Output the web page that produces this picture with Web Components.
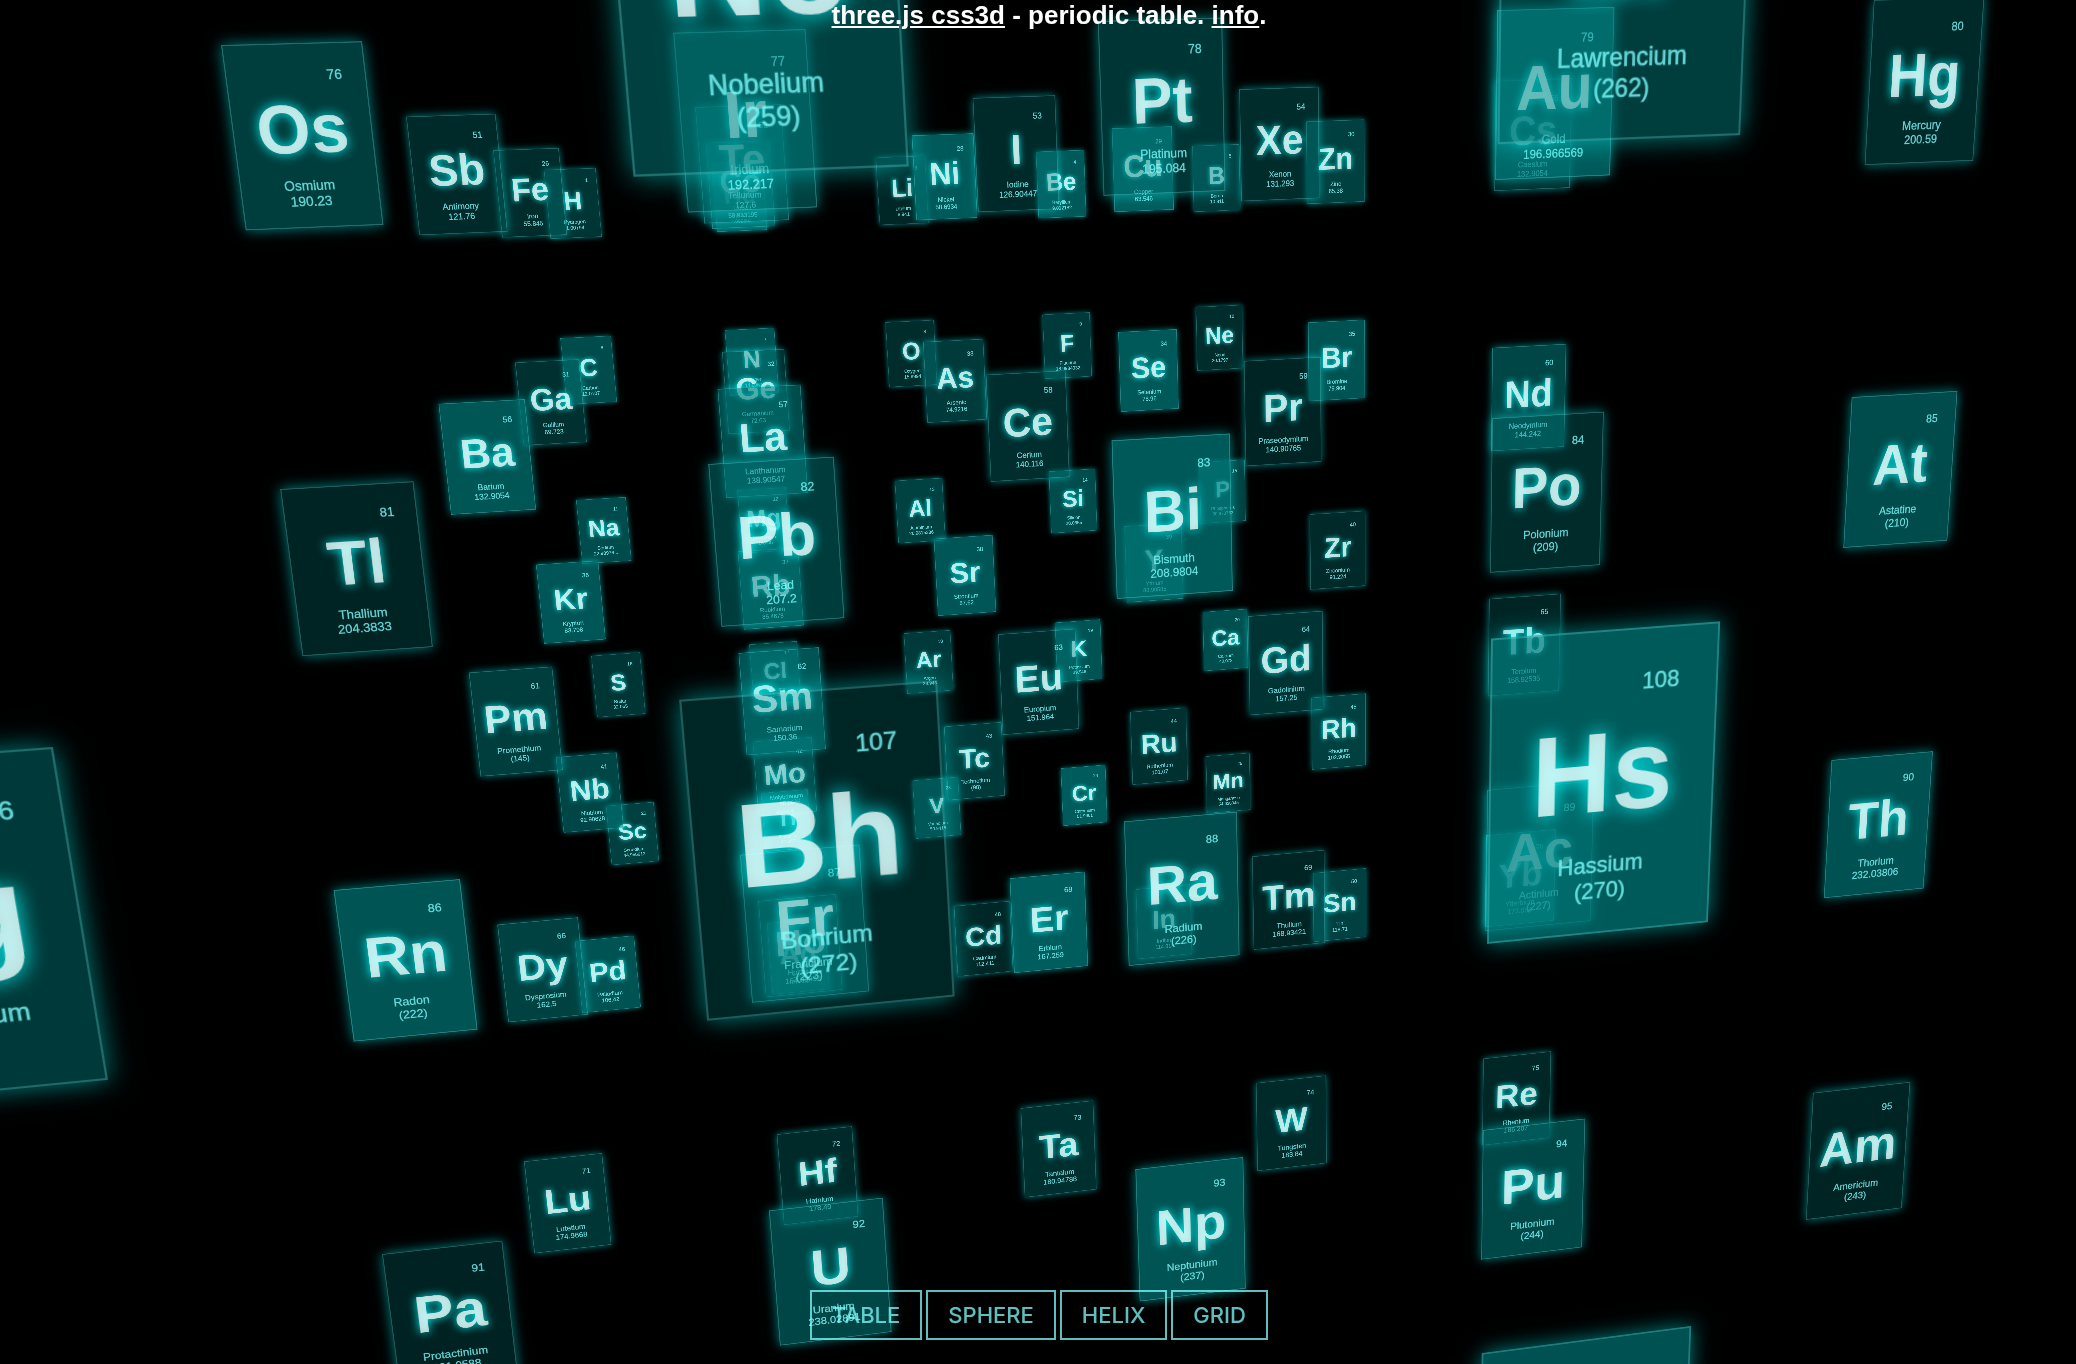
<!DOCTYPE html>
<html lang="en">
<head>
<meta charset="utf-8">
<meta name="viewport" content="width=device-width, initial-scale=1">
<title>three.js css3d - periodic table</title>
<style>
  html, body { height: 100%; margin: 0; background: #000; overflow: hidden; }
  body { font-family: "Liberation Sans", Helvetica, Arial, sans-serif; }
</style>
</head>
<body>
<periodic-app></periodic-app>

<template id="tpl-app">
  <style>
    :host { display: grid; height: 100vh; grid-template: minmax(0, 1fr) / minmax(0, 1fr); overflow: hidden; }
    element-scene, .overlay { grid-area: 1 / 1; min-width: 0; min-height: 0; }
    .overlay {
      display: flex; flex-direction: column; justify-content: space-between;
      z-index: 1; pointer-events: none;
    }
    info-bar, layout-menu { pointer-events: auto; }
  </style>
  <element-scene></element-scene>
  <div class="overlay">
    <info-bar>
      <a href="#threejs">three.js css3d</a> - periodic table. <a href="#info">info</a>.
    </info-bar>
    <layout-menu>
      <menu-button>TABLE</menu-button>
      <menu-button>SPHERE</menu-button>
      <menu-button>HELIX</menu-button>
      <menu-button>GRID</menu-button>
    </layout-menu>
  </div>
</template>

<template id="tpl-info">
  <style>
    :host {
      display: block; padding-left: 22px; text-align: center;
      color: #fff; font-size: 26px; font-weight: bold; line-height: 30px;
    }
    ::slotted(a) { color: #fff; text-decoration: underline; }
  </style>
  <slot></slot>
</template>

<template id="tpl-menu">
  <style>
    :host { display: flex; justify-content: center; gap: 8px; padding: 0 0 26px 2px; }
  </style>
  <slot></slot>
</template>

<template id="tpl-button">
  <style>
    :host { display: block; }
    button {
      display: block; margin: 0; border: 0; padding: 10px 20px; background: transparent;
      outline: 2px solid rgba(127, 255, 255, 0.75); color: rgba(127, 255, 255, 0.75);
      font-family: Inter, "Liberation Sans", sans-serif; font-size: 22px; font-weight: 500;
      line-height: 26px; cursor: pointer;
    }
    button:hover { background: rgba(0, 255, 255, 0.5); }
    button:active { color: #000; background: rgba(0, 255, 255, 0.75); }
  </style>
  <button type="button"><slot></slot></button>
</template>

<template id="tpl-scene">
  <style>
    /* 140.15vh is the focal length of the camera for the window's height */
    :host {
      --focal: 140.15vh;
      display: block; position: relative; overflow: hidden;
      perspective: var(--focal); perspective-origin: 50% 50%;
    }
    .camera {
      position: absolute; left: 50%; top: 50%; width: 0; height: 0;
      transform-origin: 0 0; transform-style: preserve-3d;
      transform: translateZ(var(--focal)) matrix3d(
        0.987432, -0.075044, -0.139091, 0,
        0.041589, 0.972440, -0.229415, 0,
        0.152474, 0.220747, 0.963339, 0,
        3, 0, -6000, 1);
    }
  </style>
  <div class="camera"></div>
</template>

<template id="tpl-card">
  <style>
    :host {
      display: block; position: absolute; left: 0; top: 0; width: 240px; height: 320px;
      border: 2px solid rgba(127, 255, 255, 0.25);
      box-shadow: 0 0 24px rgba(0, 255, 255, 0.5);
      text-align: center; line-height: normal; cursor: default;
    }
    .number, .details {
      position: absolute; font-size: 24px; color: rgba(127, 255, 255, 0.75);
      -webkit-text-stroke: 1px rgba(127, 255, 255, 0.4);
    }
    .number { top: 40px; right: 40px; }
    .symbol {
      position: absolute; top: 78px; left: 0; right: 0;
      font-size: 120px; font-weight: bold; color: rgba(255, 255, 255, 0.75);
      text-shadow: 0 0 20px rgba(0, 255, 255, 0.95);
    }
    .details { bottom: 31px; left: 0; right: 0; }
    .details div { white-space: nowrap; }
  </style>
  <div class="number"></div>
  <div class="symbol"></div>
  <div class="details"><div class="name"></div><div class="mass"></div></div>
</template>

<script>
// symbol, name, atomic mass, opacity of the card
const TABLE = [
  ['H', 'Hydrogen', '1.00794', 0.42], ['He', 'Helium', '4.002602', 0.6], ['Li', 'Lithium', '6.941', 0.3],
  ['Be', 'Beryllium', '9.012182', 0.7], ['B', 'Boron', '10.811', 0.45], ['C', 'Carbon', '12.0107', 0.6],
  ['N', 'Nitrogen', '14.0067', 0.65], ['O', 'Oxygen', '15.9994', 0.35], ['F', 'Fluorine', '18.9984032', 0.45],
  ['Ne', 'Neon', '20.1797', 0.35], ['Na', 'Sodium', '22.98976...', 0.6], ['Mg', 'Magnesium', '24.305', 0.55],
  ['Al', 'Aluminium', '26.9815386', 0.52], ['Si', 'Silicon', '28.0855', 0.6], ['P', 'Phosphorus', '30.973762', 0.5],
  ['S', 'Sulfur', '32.065', 0.42], ['Cl', 'Chlorine', '35.453', 0.5], ['Ar', 'Argon', '39.948', 0.45],
  ['K', 'Potassium', '39.948', 0.65], ['Ca', 'Calcium', '40.078', 0.62], ['Sc', 'Scandium', '44.955912', 0.5],
  ['Ti', 'Titanium', '47.867', 0.7], ['V', 'Vanadium', '50.9415', 0.55], ['Cr', 'Chromium', '51.9961', 0.72],
  ['Mn', 'Manganese', '54.938045', 0.36], ['Fe', 'Iron', '55.845', 0.35], ['Co', 'Cobalt', '58.933195', 0.6],
  ['Ni', 'Nickel', '58.6934', 0.7], ['Cu', 'Copper', '63.546', 0.72], ['Zn', 'Zinc', '65.38', 0.5],
  ['Ga', 'Gallium', '69.723', 0.38], ['Ge', 'Germanium', '72.63', 0.4], ['As', 'Arsenic', '74.9216', 0.46],
  ['Se', 'Selenium', '78.96', 0.7], ['Br', 'Bromine', '79.904', 0.65], ['Kr', 'Krypton', '83.798', 0.68],
  ['Rb', 'Rubidium', '85.4678', 0.6], ['Sr', 'Strontium', '87.62', 0.68], ['Y', 'Yttrium', '88.90585', 0.5],
  ['Zr', 'Zirconium', '91.224', 0.32], ['Nb', 'Niobium', '92.90628', 0.55], ['Mo', 'Molybdenum', '95.96', 0.5],
  ['Tc', 'Technetium', '(98)', 0.45], ['Ru', 'Ruthenium', '101.07', 0.38], ['Rh', 'Rhodium', '102.9055', 0.5],
  ['Pd', 'Palladium', '106.42', 0.65], ['Ag', 'Silver', '107.8682', 0.5], ['Cd', 'Cadmium', '112.411', 0.3],
  ['In', 'Indium', '114.818', 0.35], ['Sn', 'Tin', '118.71', 0.5], ['Sb', 'Antimony', '121.76', 0.32],
  ['Te', 'Tellurium', '127.6', 0.5], ['I', 'Iodine', '126.90447', 0.33], ['Xe', 'Xenon', '131.293', 0.35],
  ['Cs', 'Caesium', '132.9054', 0.35], ['Ba', 'Barium', '132.9054', 0.67], ['La', 'Lanthanum', '138.90547', 0.6],
  ['Ce', 'Cerium', '140.116', 0.36], ['Pr', 'Praseodymium', '140.90765', 0.28], ['Nd', 'Neodymium', '144.242', 0.55],
  ['Pm', 'Promethium', '(145)', 0.48], ['Sm', 'Samarium', '150.36', 0.65], ['Eu', 'Europium', '151.964', 0.36],
  ['Gd', 'Gadolinium', '157.25', 0.4], ['Tb', 'Terbium', '158.92535', 0.28], ['Dy', 'Dysprosium', '162.5', 0.52],
  ['Ho', 'Holmium', '164.93032', 0.4], ['Er', 'Erbium', '167.259', 0.73], ['Tm', 'Thulium', '168.93421', 0.28],
  ['Yb', 'Ytterbium', '173.054', 0.7], ['Lu', 'Lutetium', '174.9668', 0.42], ['Hf', 'Hafnium', '178.49', 0.33],
  ['Ta', 'Tantalum', '180.94788', 0.37], ['W', 'Tungsten', '183.84', 0.32], ['Re', 'Rhenium', '186.207', 0.3],
  ['Os', 'Osmium', '190.23', 0.48], ['Ir', 'Iridium', '192.217', 0.5], ['Pt', 'Platinum', '195.084', 0.42],
  ['Au', 'Gold', '196.966569', 0.7], ['Hg', 'Mercury', '200.59', 0.32], ['Tl', 'Thallium', '204.3833', 0.28],
  ['Pb', 'Lead', '207.2', 0.47], ['Bi', 'Bismuth', '208.9804', 0.7], ['Po', 'Polonium', '(209)', 0.34],
  ['At', 'Astatine', '(210)', 0.6], ['Rn', 'Radon', '(222)', 0.66], ['Fr', 'Francium', '(223)', 0.5],
  ['Ra', 'Radium', '(226)', 0.6], ['Ac', 'Actinium', '(227)', 0.4], ['Th', 'Thorium', '232.03806', 0.64],
  ['Pa', 'Protactinium', '231.0588', 0.27], ['U', 'Uranium', '238.02891', 0.55], ['Np', 'Neptunium', '(237)', 0.66],
  ['Pu', 'Plutonium', '(244)', 0.57], ['Am', 'Americium', '(243)', 0.28], ['Cm', 'Curium', '(247)', 0.5],
  ['Bk', 'Berkelium', '(247)', 0.5], ['Cf', 'Californium', '(251)', 0.5], ['Es', 'Einstenium', '(252)', 0.5],
  ['Fm', 'Fermium', '(257)', 0.5], ['Md', 'Mendelevium', '(258)', 0.5], ['No', 'Nobelium', '(259)', 0.5],
  ['Lr', 'Lawrencium', '(262)', 0.48], ['Rf', 'Rutherfordium', '(267)', 0.5], ['Db', 'Dubnium', '(268)', 0.5],
  ['Sg', 'Seaborgium', '(271)', 0.45], ['Bh', 'Bohrium', '(272)', 0.29], ['Hs', 'Hassium', '(270)', 0.71],
  ['Mt', 'Meitnerium', '(276)', 0.5], ['Ds', 'Darmstadium', '(281)', 0.5], ['Rg', 'Roentgenium', '(280)', 0.5],
  ['Cn', 'Copernicium', '(285)', 0.5], ['Nh', 'Nihonium', '(286)', 0.64], ['Fl', 'Flerovium', '(289)', 0.5],
  ['Mc', 'Moscovium', '(290)', 0.5], ['Lv', 'Livermorium', '(293)', 0.5], ['Ts', 'Tennessine', '(294)', 0.5],
  ['Og', 'Oganesson', '(294)', 0.5]
];

// elements whose cards lie outside the camera's view: they are not built
const CULLED = new Set(['Cm', 'Bk', 'Cf', 'Es', 'Fm', 'Md', 'Rf', 'Db', 'Mt', 'Ds', 'Rg', 'Cn',
  'Fl', 'Mc', 'Lv', 'Ts', 'Og']);

class TemplateElement extends HTMLElement {
  constructor() {
    super();
    this.attachShadow({ mode: 'open' })
      .append(document.getElementById(this.constructor.template).content.cloneNode(true));
  }
}

class ElementCard extends TemplateElement {
  static template = 'tpl-card';
  set data({ index, symbol, name, mass, opacity }) {
    const root = this.shadowRoot;
    root.querySelector('.number').textContent = index + 1;
    root.querySelector('.symbol').textContent = symbol;
    root.querySelector('.name').textContent = name;
    root.querySelector('.mass').textContent = mass;
    // the grid: 5 columns, 5 rows, then the next plane towards the viewer
    const x = (index % 5) * 800 - 1600;
    const y = (Math.floor(index / 5) % 5) * 800 - 1600;
    const z = Math.floor(index / 25) * 2000 - 4000;
    this.style.backgroundColor = `rgba(0, 127, 127, ${opacity})`;
    this.style.transform = `translate(-50%, -50%) translate3d(${x}px, ${y}px, ${z}px)`;
  }
}

class ElementScene extends TemplateElement {
  static template = 'tpl-scene';
  connectedCallback() {
    const camera = this.shadowRoot.querySelector('.camera');
    if (camera.childElementCount) return;
    TABLE.forEach(([symbol, name, mass, opacity], index) => {
      if (CULLED.has(symbol)) return;
      const card = document.createElement('element-card');
      card.data = { index, symbol, name, mass, opacity };
      camera.append(card);
    });
  }
}

class InfoBar extends TemplateElement { static template = 'tpl-info'; }
class LayoutMenu extends TemplateElement { static template = 'tpl-menu'; }
class MenuButton extends TemplateElement { static template = 'tpl-button'; }
class PeriodicApp extends TemplateElement { static template = 'tpl-app'; }

customElements.define('element-card', ElementCard);
customElements.define('element-scene', ElementScene);
customElements.define('info-bar', InfoBar);
customElements.define('layout-menu', LayoutMenu);
customElements.define('menu-button', MenuButton);
customElements.define('periodic-app', PeriodicApp);
</script>
</body>
</html>
